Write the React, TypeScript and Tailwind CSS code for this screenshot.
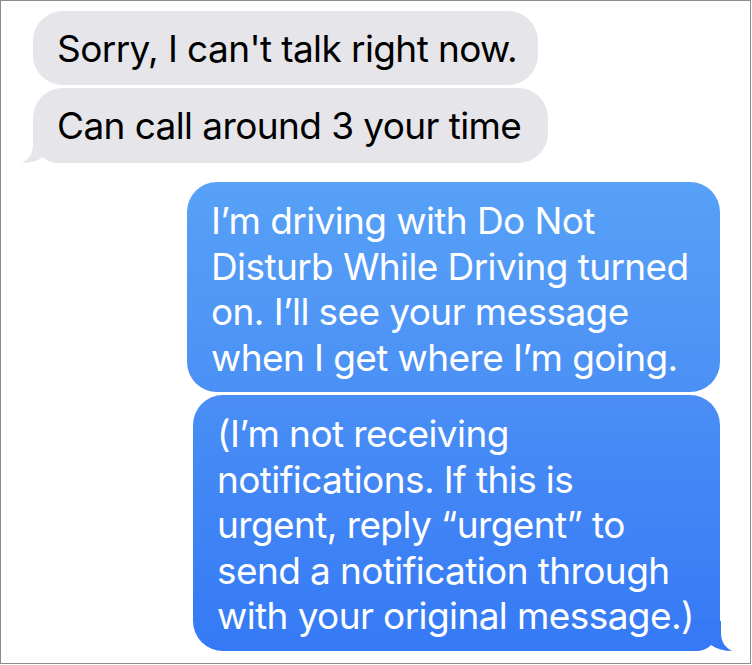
const font = { fontFamily: 'Inter, "Noto Sans", sans-serif' };

const LeftTail = () => (
  <svg
    className="absolute bottom-0 left-[-11px]"
    width="46"
    height="30"
    viewBox="0 0 46 30"
  >
    <path
      d="M11 0 L11 12 C11 21 7 26 0 30 C8 30 15 28 21 24 C25 28 30 30 37 30 L46 30 L46 0 Z"
      fill="#e5e5ea"
    />
  </svg>
);

const RightTail = () => (
  <svg
    className="absolute bottom-0 right-[-12px]"
    width="46"
    height="30"
    viewBox="0 0 46 30"
  >
    <path
      d="M35 0 L35 12 C35 21 39 26 46 30 C38 30 31 28 25 24 C21 28 16 30 9 30 L0 30 L0 0 Z"
      fill="#3579f6"
    />
  </svg>
);

export default function App() {
  return (
    <div className="w-[752px] h-[665px] bg-white">
      <div
        className="w-[751px] h-[664px] border border-[#8c8c8c] pt-[10px] pl-[32px] pr-[30px] flex flex-col"
        style={font}
      >
        <div className="flex flex-col items-start gap-[3px]">
          <div className="w-[505px] h-[74px] bg-[#e5e5ea] rounded-[30px] px-[24px] pt-[15px] text-[37px] leading-[45.5px] tracking-[-0.6px] text-black whitespace-nowrap">
            Sorry, I can't talk right now.
          </div>
          <div className="relative w-[515px] h-[75px] bg-[#e5e5ea] rounded-[30px] px-[24px] pt-[15px] text-[37px] leading-[45.5px] tracking-[-0.6px] text-black whitespace-nowrap">
            <LeftTail />
            <span className="relative">Can call around 3 your time</span>
          </div>
        </div>

        <div className="mt-[19px] flex flex-col items-end gap-[3px]">
          <div className="w-[533px] h-[210px] rounded-[30px] bg-gradient-to-b from-[#57a1f7] to-[#4b90f5] pl-[24px] pr-[20px] pt-[16px] text-[37px] leading-[45.5px] tracking-[-0.6px] text-white whitespace-nowrap">
            I’m driving with Do Not
            <br />
            Disturb While Driving turned
            <br />
            on. I’ll see your message
            <br />
            when I get where I’m going.
          </div>
          <div className="relative w-[527px] h-[256px] rounded-[30px] bg-gradient-to-b from-[#4a8ef5] to-[#3579f6] pl-[24px] pr-[20px] pt-[16px] text-[37px] leading-[45.5px] tracking-[-0.6px] text-white whitespace-nowrap">
            <RightTail />
            <div className="relative">
              (I’m not receiving
              <br />
              notifications. If this is
              <br />
              urgent, reply “urgent” to
              <br />
              send a notification through
              <br />
              with your original message.)
            </div>
          </div>
        </div>
      </div>
    </div>
  );
}
